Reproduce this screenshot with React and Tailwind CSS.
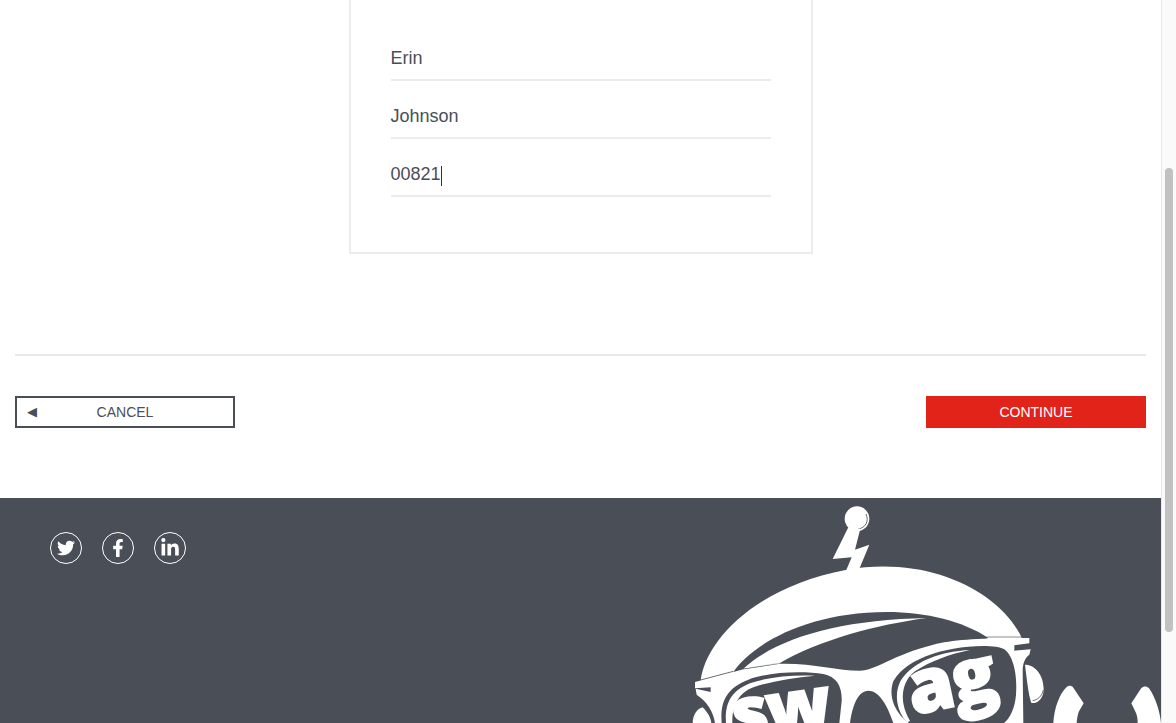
import React from "react";
import { FaTwitter, FaFacebookF, FaLinkedinIn } from "react-icons/fa";

const D = "#4a4e57";

function Field({ value, caret }) {
  return (
    <div className="flex h-[58px] items-end border-b-2 border-[#ececec] pb-[10px] text-[18px] leading-[21px] text-[#4a4e57]">
      <span>{value}</span>
      {caret && <span className="mb-[-1px] h-[20px] w-px bg-[#30333a]" />}
    </div>
  );
}

function Social({ children, size }) {
  return (
    <a className={`flex h-8 w-8 items-center justify-center rounded-full border border-white text-white ${size}`}>
      {children}
    </a>
  );
}

function Logo() {
  return (
    <svg width="481" height="225" viewBox="0 0 1443 675" className="shrink-0" aria-hidden="true">
      {/* antenna */}
      <circle cx="531" cy="62" r="37" fill="#fff" />
      <path d="M558 48C568 70 556 90 534 93" fill="none" stroke={D} strokeWidth="2.5" />
      <path d="M505 88L458 183L515 178L498 218L538 212L568 140L525 155L541 92Z" fill="#fff" />
      {/* dome */}
      <path d="M62 550C72 440 210 270 500 215C600 197 700 205 780 230C900 268 990 340 1028 425L800 480L300 520Z" fill="#fff" />
      {/* visor */}
      <path d="M160 522C215 440 380 342 620 342C740 342 850 370 925 420L700 520L300 560L170 530Z" fill={D} />
      <path d="M190 512C290 420 480 365 740 360C590 380 420 425 296 497Z" fill="#fff" />
      {/* glasses frame */}
      <path d="M45 552L160 522L190 514L300 497C400 495 470 518 540 518C585 518 640 470 760 440C820 425 900 420 1048 420L1048 436L1003 442L1003 458L1052 454L1048 470C1035 480 1028 495 1028 520L1030 675L640 675C620 615 595 578 565 578C535 578 518 620 510 675L105 675C100 640 80 610 50 590L47 572L92 582L92 568L45 571Z" fill="#fff" />
      <path d="M62 546L160 520" stroke={D} strokeWidth="2.5" />
      <path d="M190 513L296 496" stroke={D} strokeWidth="1" />
      <path d="M920 417L1030 417" stroke={D} strokeWidth="2" />
      {/* left ear */}
      <path d="M38 675C38 650 52 632 68 628C85 645 92 660 94 675Z" fill="#fff" />
      {/* left lens */}
      <path d="M125 675C120 610 140 570 205 545C260 522 370 518 430 528C470 536 487 565 485 610L478 675Z" fill={D} />
      <path d="M138 675C134 620 150 580 210 556C270 535 340 530 405 533C340 540 270 550 220 568C175 585 155 625 157 675Z" fill="#fff" />
      {/* right lens */}
      <path d="M685 675C640 640 625 590 640 550C660 510 720 470 820 452C880 442 950 440 975 455C1000 475 1012 530 1008 590C1005 630 990 660 972 675Z" fill={D} />
      <path d="M682 675C650 640 642 590 660 552C680 515 730 480 800 465C825 460 850 457 870 456C810 468 750 490 705 520C665 550 655 610 690 668Z" fill="#fff" />
      {/* right ear */}
      <path d="M1035 500C1065 500 1090 530 1091 572C1092 600 1072 618 1054 615C1045 590 1040 540 1035 500Z" fill="#fff" />
      <path d="M1090 576C1086 595 1072 606 1058 608" fill="none" stroke={D} strokeWidth="2.5" />
      {/* lettering */}
      <text x="165" y="726" transform="rotate(-8 165 726)" fontFamily="'Open Sans', sans-serif" fontWeight="800" fontSize="215" fill="#fff" stroke="#fff" strokeWidth="5" textLength="300">sw</text>
      <text x="698" y="652" transform="rotate(-12 698 652)" fontFamily="'Open Sans', sans-serif" fontWeight="800" fontSize="225" fill="#fff" stroke="#fff" strokeWidth="5" textLength="270">ag</text>
      {/* arms */}
      <path d="M1120 675C1122 630 1140 585 1160 567C1166 562 1174 562 1179 568L1211 616L1197 640C1193 650 1191 662 1190 675Z" fill="#fff" />
      <path d="M1443 675C1440 640 1425 595 1407 571C1400 563 1390 564 1384 570L1354 616L1368 645C1372 655 1373 665 1373 675Z" fill="#fff" />
    </svg>
  );
}

export default function App() {
  return (
    <div className="flex h-[723px] w-full overflow-hidden bg-white font-['Liberation_Sans',Arial,sans-serif]">
      <div className="flex min-w-0 flex-1 flex-col">
        <div className="h-[498px] shrink-0 px-[15px]">
          <div className="mx-auto h-[254px] w-[464px] border-x-2 border-b-2 border-[#ececec] px-[40px] pt-[23px]">
            <Field value="Erin" />
            <Field value="Johnson" />
            <Field value="00821" caret />
          </div>
          <div className="mt-[100px] border-t-2 border-[#e9e9e9]" />
          <div className="mt-[40px] flex justify-between">
            <button className="grid h-8 w-[220px] grid-cols-[1fr_auto_1fr] items-center border-2 border-[#4a4e57] px-[10px] text-[14px] text-[#4a4e57]">
              <span className="mb-[2px] text-left text-[13px] leading-none">◀</span>
              <span>CANCEL</span>
              <span />
            </button>
            <button className="h-8 w-[220px] bg-[#e2231a] text-[14px] text-white">CONTINUE</button>
          </div>
        </div>
        <footer className="flex h-[225px] shrink-0 justify-between overflow-hidden bg-[#4a4e57]">
          <div className="flex h-8 gap-5 pl-[50px] mt-[34px]">
            <Social size="text-[18px]"><FaTwitter /></Social>
            <Social size="text-[18px]"><FaFacebookF /></Social>
            <Social size="text-[20px]"><FaLinkedinIn /></Social>
          </div>
          <Logo />
        </footer>
      </div>
      <div className="w-[15px] shrink-0 border-l border-[#e8e8e8] bg-[#fafafa] pl-[3px] pt-[168px]">
        <div className="h-[464px] w-2 rounded-[4px] bg-[#c1c1c1]" />
      </div>
    </div>
  );
}
